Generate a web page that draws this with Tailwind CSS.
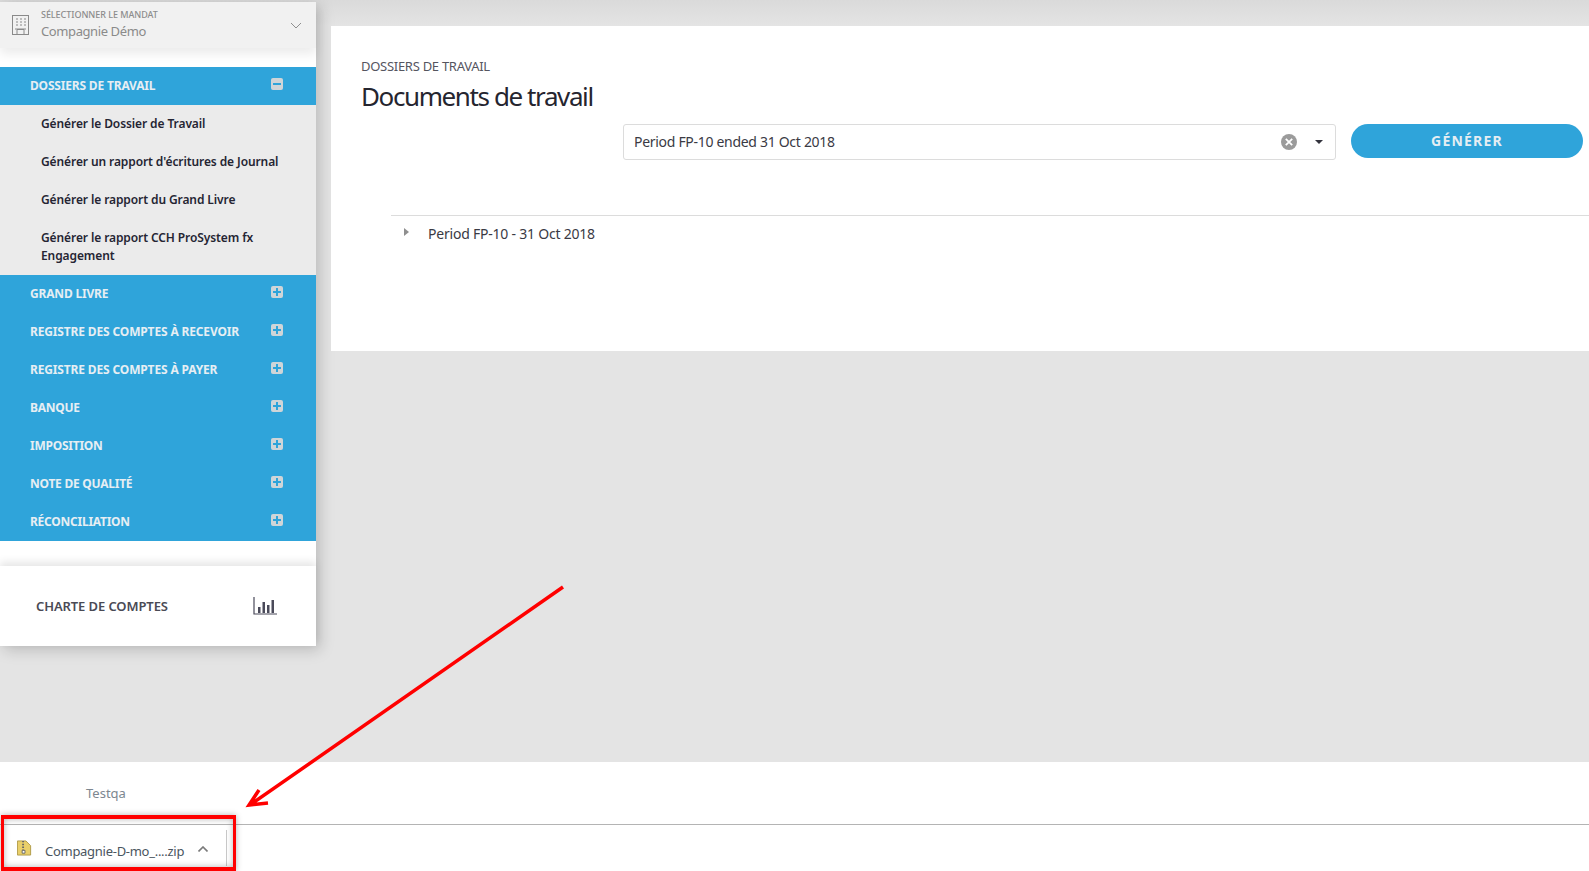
<!DOCTYPE html>
<html lang="fr"><head><meta charset="utf-8"><script src="https://cdn.jsdelivr.net/npm/@tailwindcss/browser@4"></script></head>
<body class="relative w-[1589px] h-[871px] overflow-hidden bg-[#e4e4e4] font-['Noto_Sans',sans-serif]">
<div class="flex flex-col h-full">
  <div class="flex h-[762px] shrink-0 items-start bg-[linear-gradient(#dadada_0px,#e4e4e4_26px)]">
    <aside class="w-[316px] shrink-0 h-[644px] mt-[2px] bg-white shadow-[4px_4px_14px_rgba(0,0,0,0.18)] relative flex flex-col">
      <div class="h-[46px] bg-[#f1f1f1] shadow-[0_6px_10px_rgba(0,0,0,0.08)] flex items-center pl-[12px] pr-[14px] shrink-0">
        <svg class="w-[17px] h-[20px] shrink-0" viewBox="0 0 17 20" fill="none" stroke="#8a8a8a" stroke-width="1"><rect x="0.5" y="0.5" width="16" height="19"/><path d="M5 19.500v-5h7v5M3 14h11" /><path d="M4 4h2M8 4h2M12 4h2M4 7h2M8 7h2M12 7h2M4 10h2M8 10h2M12 10h2" stroke-width="1.200"/></svg>
        <div class="ml-[12px] flex-1 -mt-[2px]">
          <div class="text-[9px] leading-[12px] text-[#8c8c8c] font-medium tracking-[-0.05px]">SÉLECTIONNER LE MANDAT</div>
          <div class="text-[13px] leading-[18px] mt-[1px] text-[#8a8a8a] tracking-[-0.4px]">Compagnie Démo</div>
        </div>
        <svg class="w-[12px] h-[7px]" viewBox="0 0 12 7" fill="none" stroke="#8f8f8f" stroke-width="1"><path d="M1 1l5 5 5-5"/></svg>
      </div>
      <nav class="mt-[19px] bg-[#2fa4da]">
        <div class="h-[38px] flex items-center justify-between pl-[30px] pr-[33px] text-[12px] font-bold text-[#e6eef3] tracking-[-0.18px]"><span>DOSSIERS DE TRAVAIL</span><span class="w-[12px] h-[12px] rounded-[2px] bg-[#cfd5d8] flex items-center justify-center -mt-[5px]"><span class="w-[8px] h-[2px] bg-[#2fa4da]"></span></span></div>
        <div class="bg-[#ebebeb] h-[170px] pl-[41px] pr-[30px] text-[12px] font-semibold text-[#252533] tracking-[-0.1px] leading-[18px]">
          <div class="h-[38px] flex items-center">Générer le Dossier de Travail</div>
          <div class="h-[38px] flex items-center">Générer un rapport d'écritures de Journal</div>
          <div class="h-[38px] flex items-center">Générer le rapport du Grand Livre</div>
          <div class="pt-[10px]">Générer le rapport CCH ProSystem fx Engagement</div>
        </div>
        <div class="h-[38px] flex items-center justify-between pl-[30px] pr-[33px] text-[12px] font-bold text-[#e6eef3] tracking-[-0.18px]"><span>GRAND LIVRE</span><span class="relative w-[12px] h-[12px] rounded-[2px] bg-[#cfd5d8] flex items-center justify-center -mt-[5px]"><span class="w-[8px] h-[2px] bg-[#2fa4da]"></span><span class="absolute w-[2px] h-[8px] bg-[#2fa4da]"></span></span></div>
        <div class="h-[38px] flex items-center justify-between pl-[30px] pr-[33px] text-[12px] font-bold text-[#e6eef3] tracking-[-0.15px]"><span>REGISTRE DES COMPTES À RECEVOIR</span><span class="relative w-[12px] h-[12px] rounded-[2px] bg-[#cfd5d8] flex items-center justify-center -mt-[5px]"><span class="w-[8px] h-[2px] bg-[#2fa4da]"></span><span class="absolute w-[2px] h-[8px] bg-[#2fa4da]"></span></span></div>
        <div class="h-[38px] flex items-center justify-between pl-[30px] pr-[33px] text-[12px] font-bold text-[#e6eef3] tracking-[-0.15px]"><span>REGISTRE DES COMPTES À PAYER</span><span class="relative w-[12px] h-[12px] rounded-[2px] bg-[#cfd5d8] flex items-center justify-center -mt-[5px]"><span class="w-[8px] h-[2px] bg-[#2fa4da]"></span><span class="absolute w-[2px] h-[8px] bg-[#2fa4da]"></span></span></div>
        <div class="h-[38px] flex items-center justify-between pl-[30px] pr-[33px] text-[12px] font-bold text-[#e6eef3] tracking-[-0.25px]"><span>BANQUE</span><span class="relative w-[12px] h-[12px] rounded-[2px] bg-[#cfd5d8] flex items-center justify-center -mt-[5px]"><span class="w-[8px] h-[2px] bg-[#2fa4da]"></span><span class="absolute w-[2px] h-[8px] bg-[#2fa4da]"></span></span></div>
        <div class="h-[38px] flex items-center justify-between pl-[30px] pr-[33px] text-[12px] font-bold text-[#e6eef3] tracking-[-0.25px]"><span>IMPOSITION</span><span class="relative w-[12px] h-[12px] rounded-[2px] bg-[#cfd5d8] flex items-center justify-center -mt-[5px]"><span class="w-[8px] h-[2px] bg-[#2fa4da]"></span><span class="absolute w-[2px] h-[8px] bg-[#2fa4da]"></span></span></div>
        <div class="h-[38px] flex items-center justify-between pl-[30px] pr-[33px] text-[12px] font-bold text-[#e6eef3] tracking-[-0.25px]"><span>NOTE DE QUALITÉ</span><span class="relative w-[12px] h-[12px] rounded-[2px] bg-[#cfd5d8] flex items-center justify-center -mt-[5px]"><span class="w-[8px] h-[2px] bg-[#2fa4da]"></span><span class="absolute w-[2px] h-[8px] bg-[#2fa4da]"></span></span></div>
        <div class="h-[38px] flex items-center justify-between pl-[30px] pr-[33px] text-[12px] font-bold text-[#e6eef3] tracking-[-0.25px]"><span>RÉCONCILIATION</span><span class="relative w-[12px] h-[12px] rounded-[2px] bg-[#cfd5d8] flex items-center justify-center -mt-[5px]"><span class="w-[8px] h-[2px] bg-[#2fa4da]"></span><span class="absolute w-[2px] h-[8px] bg-[#2fa4da]"></span></span></div>
      </nav>
      <div class="mt-[25px] flex-1 bg-white shadow-[0_-4px_8px_rgba(0,0,0,0.1)] flex items-center justify-between pl-[36px] pr-[39px]">
        <span class="text-[13px] font-semibold text-[#4a4a55] tracking-[-0.1px] mt-[2px]">CHARTE DE COMPTES</span>
        <svg class="w-[24px] h-[18px]" viewBox="0 0 24 18" fill="none"><path d="M1 0v17h23" stroke="#4a4a5a" stroke-width="1.200"/><path d="M5 10h2.500v6H5zM9.500 5H12v11H9.500zM14 8h2.500v8H14zM18.500 3H21v13h-2.500z" fill="#4a4a5a"/></svg>
      </div>
    </aside>
    <main class="flex-1 mt-[26px] ml-[15px] h-[325px] bg-white relative">
      <div class="pl-[30px] pt-[32px]">
        <div class="text-[13px] leading-[16px] text-[#55555f] tracking-[-0.28px]">DOSSIERS DE TRAVAIL</div>
        <h1 class="text-[26px] leading-[36px] mt-[4px] text-[#25252f] font-normal tracking-[-1.4px]">Documents de travail</h1>
      </div>
      <div class="flex mt-[10px] ml-[292px] items-start">
        <div class="w-[713px] h-[36px] border border-[#dcdcdc] rounded-[3px] flex items-center pl-[10px] pr-[12px] text-[14px] text-[#3a3a44] tracking-[-0.3px]">
          <span class="flex-1 -mt-[2px]">Period FP-10 ended 31 Oct 2018</span>
          <svg class="w-[16px] h-[16px]" viewBox="0 0 16 16"><circle cx="8" cy="8" r="8" fill="#9b9b9b"/><path d="M4.800 4.800l6.400 6.400M11.200 4.800l-6.400 6.400" stroke="#fff" stroke-width="1.800"/></svg>
          <svg class="ml-[18px] w-[8px] h-[4px]" viewBox="0 0 8 4"><path d="M0 0h8L4 4z" fill="#33333d"/></svg>
        </div>
        <div class="ml-[15px] w-[232px] h-[34px] pb-[2px] rounded-full bg-[#2fa4da] text-[#e6eef3] flex items-center justify-center text-[14px] font-bold tracking-[1.200px]">GÉNÉRER</div>
      </div>
      <div class="ml-[60px] mt-[55px] border-t border-[#dcdcdc] h-[36px] flex items-center text-[14px] text-[#3a3a44] tracking-[-0.22px]">
        <svg class="ml-[13px] w-[5px] h-[8px] -mt-[3px]" viewBox="0 0 5 8"><path d="M0 0l5 4-5 4z" fill="#8f8f8f"/></svg>
        <span class="ml-[19px]">Period FP-10 - 31 Oct 2018</span>
      </div>
    </main>
  </div>
  <div class="h-[63px] bg-white border-b border-[#b4b4b4] pl-[86px] pt-[22px] text-[13px] text-[#7d8790] shrink-0">Testqa</div>
  <div class="h-[46px] bg-white flex items-center shrink-0">
    <svg class="ml-[17px] w-[15px] h-[16px] -mt-[1px]" viewBox="0 0 15 17"><path d="M0 1h9l5 5v10H0z" fill="#e9cf6a" stroke="#b09a46"/><path d="M6 1v12" stroke="#666" stroke-width="2" stroke-dasharray="1.500 1.500"/><path d="M5 11h3v3H5z" fill="#fff" stroke="#666"/></svg>
    <span class="ml-[13px] mt-[8px] text-[13px] text-[#4a5560] tracking-[-0.28px]">Compagnie-D-mo_....zip</span>
    <svg class="ml-[14px] w-[10px] h-[6px] mt-[1px]" viewBox="0 0 10 6" fill="none" stroke="#7a7a7a" stroke-width="1.600"><path d="M.5 5.500L5 1l4.500 4.500"/></svg>
    <span class="ml-[18px] w-px h-[36px] bg-[#c8c8c8]"></span>
  </div>
</div>
<div class="absolute left-[1px] top-[815px] w-[235px] h-[56px] border-y-4 border-x-[3px] border-[#ff0000] shadow-[0_0_6px_rgba(0,0,0,0.3),inset_0_0_6px_rgba(0,0,0,0.3)]"></div>
<svg class="absolute inset-0 w-[1589px] h-[871px] pointer-events-none" viewBox="0 0 1589 871" fill="none"><path d="M563 587L250 805M259 790l-10 15 19-2" stroke="#ff0000" stroke-width="3.500"/></svg>
</body></html>
